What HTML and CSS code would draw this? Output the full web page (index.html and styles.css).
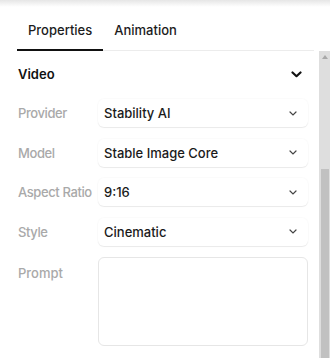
FILE: index.html
```html
<!DOCTYPE html>
<html lang="en">
<head>
    <meta charset="UTF-8">
    <meta name="viewport" content="width=device-width, initial-scale=1.0">
    <title>Video Properties</title>
    <link rel="stylesheet" href="styles.css">
</head>
<body>
    <div class="tabs-wrap">
        <div class="tabs">
            <div class="tab active">Properties</div>
            <div class="tab">Animation</div>
        </div>
    </div>

    <div class="panel">
        <div class="panel-content">
            <div class="section-head">
                <span>Video</span>
                <svg class="chev-bold" width="11" height="7" viewBox="0 0 11 7">
                    <path d="M1.5 1.5 L5.5 5.2 L9.5 1.5" fill="none" stroke="#111" stroke-width="2.2" stroke-linecap="round" stroke-linejoin="round"/>
                </svg>
            </div>

            <div class="fields">
                <label class="field-label">Provider</label>
                <div class="select">
                    <span>Stability AI</span>
                    <svg width="8" height="5" viewBox="0 0 8 5"><path d="M1 1 L4 4 L7 1" fill="none" stroke="#444" stroke-width="1.2" stroke-linecap="round"/></svg>
                </div>

                <label class="field-label">Model</label>
                <div class="select">
                    <span>Stable Image Core</span>
                    <svg width="8" height="5" viewBox="0 0 8 5"><path d="M1 1 L4 4 L7 1" fill="none" stroke="#444" stroke-width="1.2" stroke-linecap="round"/></svg>
                </div>

                <label class="field-label">Aspect Ratio</label>
                <div class="select">
                    <span>9:16</span>
                    <svg width="8" height="5" viewBox="0 0 8 5"><path d="M1 1 L4 4 L7 1" fill="none" stroke="#444" stroke-width="1.2" stroke-linecap="round"/></svg>
                </div>

                <label class="field-label">Style</label>
                <div class="select">
                    <span>Cinematic</span>
                    <svg width="8" height="5" viewBox="0 0 8 5"><path d="M1 1 L4 4 L7 1" fill="none" stroke="#444" stroke-width="1.2" stroke-linecap="round"/></svg>
                </div>

                <label class="field-label top">Prompt</label>
                <textarea class="prompt"></textarea>
            </div>
        </div>

        <div class="scrollbar">
            <div class="scroll-up"></div>
            <div class="scroll-thumb"></div>
        </div>
    </div>
</body>
</html>
```

FILE: styles.css
```css
body {
    font-family: Inter, "Noto Sans", sans-serif;
    font-size: 13px;
    font-weight: 500;
    margin: 0;
    padding: 0;
    background-color: #fff;
    color: #1a1a1a;
    overflow: hidden;
}

.tabs-wrap {
    background: linear-gradient(#e6e6e6, #fff 7px); /* shadow from the bar above */
    padding-top: 14px;
}

.tabs {
    display: flex;
    margin: 0 16px 0 17px;
    border-bottom: 1px solid #ececec;
}

.tab {
    padding: 8px 11px 11px;
    line-height: 16px;
    border-bottom: 2px solid transparent;
    margin-bottom: -1px;
    color: #1c1c1c;
}

.tab.active {
    border-bottom-color: #111;
}

.panel {
    display: flex;
    height: 307px;
}

.panel-content {
    flex: 1;
    padding: 0 11px 0 18px;
}

.section-head {
    display: flex;
    align-items: center;
    justify-content: space-between;
    height: 30px;
    margin-top: 8px;
    padding-right: 6px;
    font-weight: 600;
    color: #111;
}

.fields {
    display: grid;
    grid-template-columns: 80px 1fr;
    row-gap: 11.5px;
    margin-top: 10px;
}

.field-label {
    display: flex;
    align-items: center;
    color: #a9a9a9;
    white-space: nowrap;
    letter-spacing: -0.4px;
}

.field-label.top {
    align-items: flex-start;
    padding-top: 8px;
    line-height: 16px;
    letter-spacing: 0;
}

.select {
    display: flex;
    align-items: center;
    justify-content: space-between;
    height: 28px;
    padding: 0 11px 0 6px;
    border-radius: 6px;
    background-color: #fff;
    box-shadow: 0 1px 1px rgba(0, 0, 0, 0.07), 0 0 0 1px rgba(0, 0, 0, 0.015);
}

.prompt {
    height: 89px;
    box-sizing: border-box;
    border: 1px solid #e6e6e6;
    border-radius: 6px;
    resize: none;
    font-family: inherit;
}

.scrollbar {
    width: 11px;
    background-color: #dedede;
    display: flex;
    flex-direction: column;
    align-items: center;
}

.scroll-up {
    width: 0;
    height: 0;
    margin-top: 4px;
    border-left: 3.5px solid transparent;
    border-right: 3.5px solid transparent;
    border-bottom: 4px solid #a8a8a8;
}

.scroll-thumb {
    width: 8px;
    margin-top: 110px;
    flex: 1;
    background-color: #c1c1c1;
}
```
